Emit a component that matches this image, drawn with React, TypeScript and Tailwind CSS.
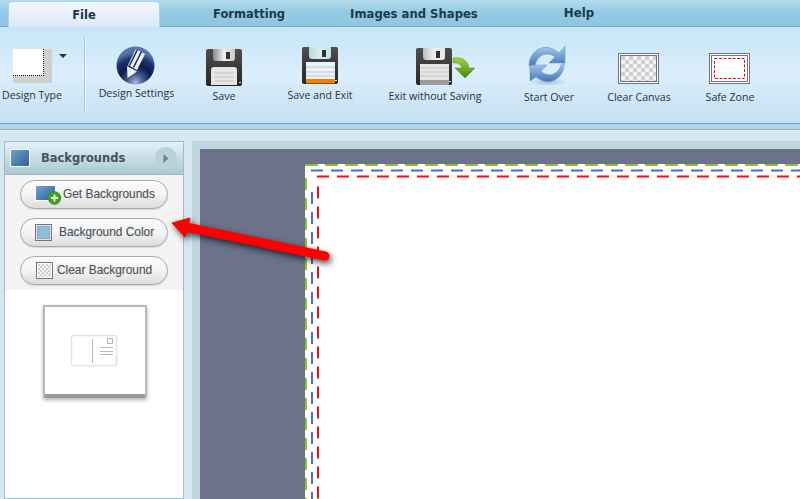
import React from "react";

const Floppy = ({ kind }: { kind: "save" | "exit" | "nosave" }) => {
  const id = kind;
  return (
    <svg width="38" height="38" viewBox="0 0 38 38">
      <defs>
        <linearGradient id={`b${id}`} x1="0" y1="0" x2="0" y2="1">
          <stop offset="0" stopColor="#4e4e4e" />
          <stop offset="1" stopColor="#262626" />
        </linearGradient>
        <linearGradient id={`s${id}`} x1="0" y1="0" x2="1" y2="0">
          <stop offset="0" stopColor={kind === "save" ? "#8a8a8a" : kind === "exit" ? "#b5dcd8" : "#bdbdbd"} />
          <stop offset="0.5" stopColor={kind === "exit" ? "#d9f0ec" : "#f0f0f0"} />
          <stop offset="1" stopColor={kind === "save" ? "#c8c8c8" : kind === "exit" ? "#c2e4df" : "#e8e8e8"} />
        </linearGradient>
      </defs>
      <path d="M3 0H35Q37 0 37 2V35Q37 37 35 37H3Q1 37 1 35V2Q1 0 3 0Z" fill={`url(#b${id})`} />
      <path d="M8 0H30V9Q30 12 27 12H11Q8 12 8 9Z" fill={`url(#s${id})`} />
      <rect x="21" y="3" width="4" height="7" fill="#333" />
      {kind === "save" && (
        <>
          <path d="M6 36V21Q6 18 9 18H29Q32 18 32 21V36Z" fill="#e6e6e6" />
          <path d="M9 24H29M9 28H29M9 32H29" stroke="#c4c4c4" strokeWidth="1" />
        </>
      )}
      {kind === "exit" && (
        <>
          <rect x="5" y="15" width="29" height="21" fill="#eef2f6" />
          <path d="M5 20H34M5 25H34M5 29H34" stroke="#bcc7d2" strokeWidth="1" />
          <rect x="5" y="32" width="29" height="4.5" fill="#ee8208" />
        </>
      )}
      {kind === "nosave" && (
        <>
          <rect x="5" y="16" width="29" height="21" fill="#e4e4e4" />
          <path d="M5 20H34M5 24H34M5 28H34" stroke="#c8c8c8" strokeWidth="1" />
          <rect x="5" y="32" width="29" height="5" fill="#9a9a9a" />
        </>
      )}
      <rect x="34" y="33" width="2" height="1" fill="#e8e8e8" />
    </svg>
  );
};

const ToolItem = ({
  width,
  iconTop,
  iconH,
  labelTop,
  label,
  children,
}: {
  width: string;
  iconTop: string;
  iconH: string;
  labelTop: string;
  label: string;
  children: React.ReactNode;
}) => (
  <div className={`flex flex-col items-center ${width}`}>
    <div className={`flex items-start justify-center ${iconTop} ${iconH}`}>{children}</div>
    <div className={`whitespace-nowrap text-[10.6px] leading-[14px] text-[#24343f] ${labelTop}`}>{label}</div>
  </div>
);

const Checker = ({ x, y, w, h, s, id }: { x: number; y: number; w: number; h: number; s: number; id: string }) => (
  <>
    <defs>
      <pattern id={id} width={s * 2} height={s * 2} patternUnits="userSpaceOnUse" x={x} y={y}>
        <rect width={s * 2} height={s * 2} fill="#f2f2f2" />
        <rect width={s} height={s} fill="#cfcfcf" />
        <rect x={s} y={s} width={s} height={s} fill="#cfcfcf" />
      </pattern>
    </defs>
    <rect x={x} y={y} width={w} height={h} fill={`url(#${id})`} />
  </>
);

const PillButton = ({ icon, label, className }: { icon: React.ReactNode; label: string; className: string }) => (
  <div className="flex h-[29px] w-[148px] items-center rounded-full border border-[#a8a8a8] bg-gradient-to-b from-[#fbfbfb] via-[#f4f4f4] to-[#dcdcdc] shadow-[0_1px_1px_rgba(0,0,0,0.12)]">
    <div className={`flex items-center ${className}`}>
      {icon}
      <span className="whitespace-nowrap font-['Liberation_Sans',sans-serif] text-[11.9px] text-[#4c5560] [text-shadow:0_0_1px_rgba(90,100,110,0.35)]">{label}</span>
    </div>
  </div>
);

export default function App() {
  return (
    <div className="h-[499px] w-[800px] overflow-hidden bg-[#d5e8f2] font-['Open_Sans','Liberation_Sans',sans-serif] relative">
      {/* Tabs */}
      <div className="flex h-[27px] items-end border-b border-[#7ea9bf] bg-gradient-to-b from-[#b4dcec] via-[#92c9e4] to-[#8fc6e2] pl-2 font-['DejaVu_Sans',sans-serif] text-[11.5px] font-bold text-[#1d3a4d]">
        <div className="-mb-px flex h-[26px] w-[152px] items-center justify-center rounded-t-[4px] border border-b-0 border-[#a8d3f2] bg-gradient-to-b from-[#f2f6fd] to-[#dfe9f8] pt-[3px] text-[#1f3342]">File</div>
        <div className="ml-[53px] pb-[3px]">Formatting</div>
        <div className="ml-[65px] pb-[3px] text-[11.65px]">Images and Shapes</div>
        <div className="ml-[86px] pb-[3px] text-[11.8px]">Help</div>
      </div>

      {/* Toolbar */}
      <div className="flex h-[97px] border-b border-[#7ea3b6] bg-gradient-to-b from-[#c6e5f7] via-[#dceefc] to-[#c2e0f1]">
        <div className="flex w-[64px] flex-col items-center">
          <div className="ml-[1px] mt-[22px] flex h-[34px] w-[39px] items-start bg-[#cfcfcf]">
            <div className="h-[27px] w-[31px] border-b border-r border-dotted border-black bg-white" />
          </div>
          <div className="mt-[5px] whitespace-nowrap text-[10.6px] leading-[14px] text-[#24343f]">Design Type</div>
        </div>
        <div className="relative">
          <svg className="absolute -left-[5px] top-[27px]" width="8" height="4" viewBox="0 0 8 4">
            <path d="M0 0H8L4 4Z" fill="#1d3346" />
          </svg>
        </div>
        <div className="ml-[20px] mr-[5px] mt-[9px] h-[75px] w-px bg-[#9ecde8] shadow-[1px_0_0_#eef8ff]" />
        <ToolItem width="w-[90px]" iconTop="pt-[19px]" iconH="h-[60px]" labelTop="mt-[-1px] ml-[3px]" label="Design Settings">
          <svg width="39" height="39" viewBox="0 0 39 39">
            <defs>
              <radialGradient id="globe" cx="0.5" cy="0.95" r="0.8">
                <stop offset="0" stopColor="#a9bdd8" />
                <stop offset="0.28" stopColor="#3d5a92" />
                <stop offset="0.55" stopColor="#0e1d4e" />
                <stop offset="0.8" stopColor="#1d3470" />
                <stop offset="1" stopColor="#5a74a8" />
              </radialGradient>
            </defs>
            <circle cx="19.5" cy="19.5" r="19" fill="url(#globe)" />
            <path d="M20 3L29 8L21 24L12 19Z" fill="#eef1f7" />
            <path d="M21.5 3.5L13.5 19.5M25.5 5.5L17.5 21.5" stroke="#16275e" strokeWidth="1.5" />
            <path d="M11 20L21 25.5L11.5 32Z" fill="#eef1f7" />
          </svg>
        </ToolItem>
        <ToolItem width="w-[88px]" iconTop="pt-[22px]" iconH="h-[62px]" labelTop="mt-0" label="Save">
          <Floppy kind="save" />
        </ToolItem>
        <ToolItem width="w-[104px]" iconTop="pt-[20px]" iconH="h-[60px]" labelTop="mt-[1px]" label="Save and Exit">
          <Floppy kind="exit" />
        </ToolItem>
        <ToolItem width="w-[124px]" iconTop="pt-[21px]" iconH="h-[62px]" labelTop="mt-0 ml-[2px]" label="Exit without Saving">
          <div className="relative">
            <Floppy kind="nosave" />
            <svg className="absolute left-[37px] top-[8px]" width="24" height="24" viewBox="0 0 24 24">
              <defs>
                <linearGradient id="grn" x1="0" y1="0" x2="0" y2="1">
                  <stop offset="0" stopColor="#a6d43a" />
                  <stop offset="1" stopColor="#3f8a10" />
                </linearGradient>
              </defs>
              <path d="M1 2Q15 0 17 12H23L13 22L3 12H10Q8 6 1 7Z" fill="url(#grn)" stroke="#4b8c16" strokeWidth="0.5" />
            </svg>
          </div>
        </ToolItem>
        <ToolItem width="w-[104px]" iconTop="pt-[18px]" iconH="h-[64px]" labelTop="-mt-[1px] ml-[2px]" label="Start Over">
          <svg width="40" height="42" viewBox="0 0 40 42">
            <defs>
              <linearGradient id="blu" x1="0" y1="0" x2="0" y2="1">
                <stop offset="0" stopColor="#a9cbe9" />
                <stop offset="1" stopColor="#3f79bb" />
              </linearGradient>
              <radialGradient id="sh">
                <stop offset="0" stopColor="#6b8aa0" stopOpacity="0.5" />
                <stop offset="1" stopColor="#6b8aa0" stopOpacity="0" />
              </radialGradient>
            </defs>
            <ellipse cx="20" cy="37" rx="19" ry="4" fill="url(#sh)" />
            <path d="M1 21C1 8 12 0 22 3C26 4 29 6 31 8L37 1V18H21L27 12C20 6 10 9 7 20Z" fill="url(#blu)" stroke="#5d8fc4" strokeWidth="0.5" />
            <path d="M36 18C37 30 26 39 16 36C12 35 9 33 8 32L2 36V20H19L13 26C20 33 30 30 33 20Z" fill="url(#blu)" stroke="#5d8fc4" strokeWidth="0.5" />
          </svg>
        </ToolItem>
        <ToolItem width="w-[76px]" iconTop="pt-[26px]" iconH="h-[62px]" labelTop="mt-[1px] ml-[2px]" label="Clear Canvas">
          <svg width="41" height="31" viewBox="0 0 41 31">
            <rect x="0.5" y="0.5" width="40" height="30" fill="#fff" stroke="#6f7489" />
            <rect x="2.5" y="2.5" width="36" height="26" fill="none" stroke="#6f7489" />
            <Checker x={3} y={3} w={35} h={25} s={4} id="chk1" />
          </svg>
        </ToolItem>
        <ToolItem width="w-[106px]" iconTop="pt-[26px]" iconH="h-[62px]" labelTop="mt-[1px] ml-[2px]" label="Safe Zone">
          <svg width="41" height="31" viewBox="0 0 41 31">
            <rect x="0.5" y="0.5" width="40" height="30" fill="#fff" stroke="#6f7489" />
            <rect x="2.5" y="2.5" width="36" height="26" fill="#fff" stroke="#6f7489" />
            <rect x="5.5" y="5.5" width="30" height="20" fill="#fff" stroke="#e30613" strokeDasharray="3 1.5" />
          </svg>
        </ToolItem>
      </div>
      <div className="h-[6px] border-b border-[#a0b3bf] bg-[#a8d6f1]" />
      <div className="h-px bg-[#e6eef2]" />

      {/* Main */}
      <div className="flex h-[368px] pt-[10px]">
        <aside className="ml-1 flex w-[180px] flex-col border border-[#aab9c3] bg-white">
          <div className="flex h-[33px] items-center border-b border-[#9bb9c4] bg-gradient-to-b from-[#e2f3f9] to-[#a9c9d3] pl-[5px]">
            <svg width="20" height="18" viewBox="0 0 20 18">
              <defs>
                <linearGradient id="bgi" x1="0" y1="0" x2="1" y2="1">
                  <stop offset="0" stopColor="#6ea5d3" />
                  <stop offset="1" stopColor="#2e5f92" />
                </linearGradient>
              </defs>
              <rect x="0.5" y="0.5" width="19" height="17" fill="url(#bgi)" stroke="#fff" />
            </svg>
            <span className="ml-[11px] pt-[2px] font-['DejaVu_Sans',sans-serif] text-[11.5px] font-bold text-[#47505c]">Backgrounds</span>
            <div className="ml-auto mr-[6px] flex h-[22px] w-[22px] items-center justify-center rounded-full bg-[#b8d3db]">
              <svg width="6" height="9" viewBox="0 0 6 9">
                <path d="M0.5 0L5.5 4.5L0.5 9Z" fill="#6c7f8a" />
              </svg>
            </div>
          </div>
          <div className="flex h-[115px] flex-col gap-[9px] bg-[#f4f4f4] pl-[15px] pt-[5px]">
            <PillButton
              className="pl-[14px] gap-[1px]"
              label="Get Backgrounds"
              icon={
                <svg width="27" height="20" viewBox="0 0 27 20">
                  <defs>
                    <linearGradient id="bgj" x1="0" y1="0" x2="1" y2="1">
                      <stop offset="0" stopColor="#6ea5d3" />
                      <stop offset="1" stopColor="#2e5f92" />
                    </linearGradient>
                  </defs>
                  <rect x="0.5" y="0.5" width="20" height="15" fill="url(#bgj)" stroke="#fff" />
                  <circle cx="19.5" cy="13" r="6.5" fill="#3ea31e" stroke="#2d8a14" strokeWidth="0.5" />
                  <path d="M19.5 9.5V16.5M16 13H23" stroke="#fff" strokeWidth="1.8" />
                </svg>
              }
            />
            <PillButton
              className="pl-[14px] gap-[7px]"
              label="Background Color"
              icon={
                <svg width="17" height="17" viewBox="0 0 17 17">
                  <rect x="0.5" y="0.5" width="16" height="16" fill="#fff" stroke="#6f7489" />
                  <rect x="2" y="2" width="13" height="13" fill="#8fbdd3" stroke="#7e8b9a" strokeWidth="0.5" />
                </svg>
              }
            />
            <PillButton
              className="pl-[15px] gap-[4px]"
              label="Clear Background"
              icon={
                <svg width="17" height="17" viewBox="0 0 17 17">
                  <rect x="0.5" y="0.5" width="16" height="16" fill="#fff" stroke="#6f7489" />
                  <Checker x={2} y={2} w={13} h={13} s={2} id="chk2" />
                </svg>
              }
            />
          </div>
          <div className="ml-[38px] mt-[15px] h-[93px] w-[104px] border-2 border-b-0 border-[#b8b8b8] bg-white shadow-[0_2px_4px_rgba(0,0,0,0.3)]">
            <div className="h-[91px] border-b-[4px] border-[#999]">
              <div className="ml-[25px] pt-[27px]">
                <svg className="block" width="48" height="33" viewBox="0 0 48 33">
                  <rect x="1.5" y="1.5" width="45" height="30" rx="1" fill="#fff" stroke="#e4e4e4" strokeWidth="1.5" />
                  <path d="M22.5 5V29" stroke="#b8b8b8" strokeWidth="1" />
                  <rect x="37.5" y="4.5" width="5" height="5" fill="#fff" stroke="#b4b4b4" strokeWidth="1" />
                  <path d="M30 13.5H43M30 17.5H43M30 20.5H43" stroke="#b8b8b8" strokeWidth="1" />
                </svg>
              </div>
            </div>
          </div>
        </aside>
        <main className="ml-2 flex-1 bg-[#bdd5dc] pl-2 pt-2">
          <div className="h-full bg-[#6b7289] pl-[105px] pt-[15px]">
            <div className="relative h-full bg-white">
              <svg className="absolute inset-0" width="495" height="340">
                <path d="M0 1H495" stroke="#8dc21f" strokeWidth="2" strokeDasharray="13 7" />
                <path d="M1 14V340" stroke="#8dc21f" strokeWidth="2" strokeDasharray="12 8" />
                <path d="M6 6.5H495" stroke="#3f6fe0" strokeWidth="2" strokeDasharray="12 8" />
                <path d="M7 28V340" stroke="#3f6fe0" strokeWidth="2" strokeDasharray="12 8" />
                <path d="M12 12.5H495" stroke="#f00f16" strokeWidth="2" strokeDasharray="12 8" />
                <path d="M13 22.5V340" stroke="#f00f16" strokeWidth="2" strokeDasharray="12 8" />
              </svg>
            </div>
          </div>
        </main>
      </div>

      {/* Annotation arrow */}
      <svg className="absolute left-[160px] top-[205px] drop-shadow-[2px_3px_3px_rgba(0,0,0,0.7)]" width="180" height="65" viewBox="160 205 180 65">
        <path d="M186 227L325 256" stroke="#ff0000" strokeWidth="9" strokeLinecap="round" fill="none" />
        <path d="M172 223L190 218L185 237Z" fill="#ff0000" stroke="#ff0000" strokeLinejoin="round" strokeWidth="1" />
      </svg>
    </div>
  );
}
